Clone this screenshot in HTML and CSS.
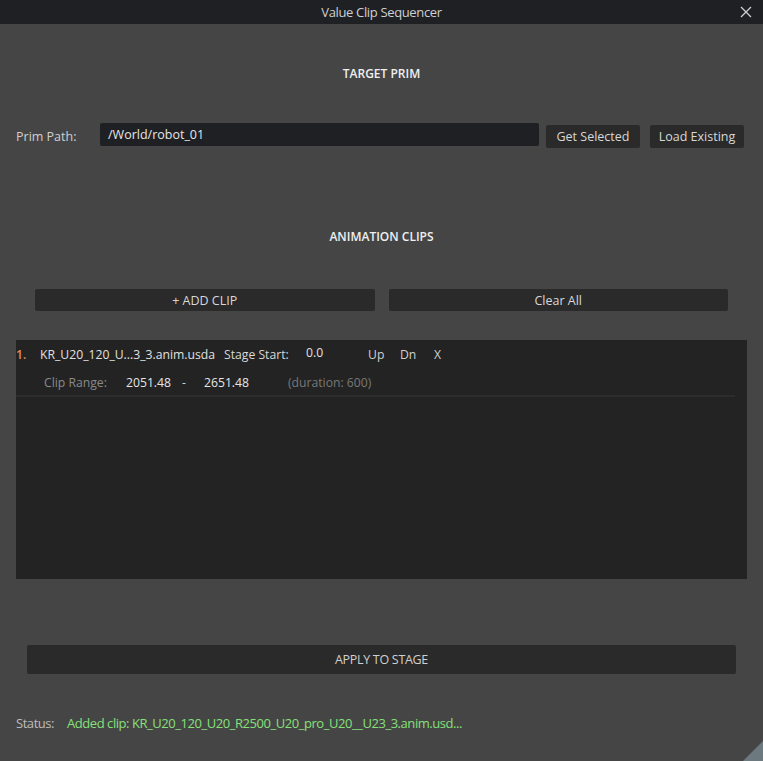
FILE: index.html
```html
<!DOCTYPE html>
<html lang="en">
<head>
    <meta charset="UTF-8">
    <title>Value Clip Sequencer</title>
    <link rel="stylesheet" href="styles.css">
</head>
<body>
    <div class="window">
        <div class="titlebar">
            <span class="title">Value Clip Sequencer</span>
            <svg class="close" width="12" height="12" viewBox="0 0 12 12">
                <path d="M1 1 L11 11 M11 1 L1 11" stroke="#d0d0d0" stroke-width="1.3" fill="none"/>
            </svg>
        </div>

        <div class="section-title first">TARGET PRIM</div>
        <div class="prim-row">
            <label class="label">Prim Path:</label>
            <div class="field">/World/robot_01</div>
            <button class="btn small">Get Selected</button>
            <button class="btn small">Load Existing</button>
        </div>

        <div class="section-title second">ANIMATION CLIPS</div>
        <div class="clip-actions">
            <button class="btn wide">+ ADD CLIP</button>
            <button class="btn wide">Clear All</button>
        </div>

        <div class="clip-list">
            <div class="clip">
                <div class="clip-head">
                    <span class="idx">1.</span>
                    <span class="name">KR_U20_120_U...3_3.anim.usda</span>
                    <span class="stage-label">Stage Start:</span>
                    <span class="stage-val">0.0</span>
                    <span class="act up">Up</span>
                    <span class="act dn">Dn</span>
                    <span class="act x">X</span>
                </div>
                <div class="clip-range">
                    <span class="range-label">Clip Range:</span>
                    <span class="num">2051.48</span>
                    <span class="dash">-</span>
                    <span class="num">2651.48</span>
                    <span class="duration">(duration: 600)</span>
                </div>
            </div>
        </div>

        <div class="apply-row">
            <button class="btn apply">APPLY TO STAGE</button>
        </div>

        <div class="status">
            <span class="status-label">Status:</span>
            <span class="status-text">Added clip: KR_U20_120_U20_R2500_U20_pro_U20__U23_3.anim.usd...</span>
        </div>

        <div class="grip"></div>
    </div>
</body>
</html>
```

FILE: styles.css
```css
body {
    margin: 0;
    background-color: #454545;
    font-family: "Open Sans", "DejaVu Sans", sans-serif;
    font-size: 12.5px;
    color: #d4d4d4;
}
.window {
    position: relative;
    width: 763px;
    height: 761px;
    background-color: #454545;
    overflow: hidden;
}
.titlebar {
    position: relative;
    height: 24px;
    background-color: #1f2024;
    display: flex;
    align-items: center;
    justify-content: center;
}
.title {
    color: #cfcfcf;
    font-size: 13px;
    letter-spacing: -0.35px;
}
.close {
    position: absolute;
    right: 11px;
    top: 6px;
}
.section-title {
    text-align: center;
    color: #f0f0f0;
    font-size: 12px;
    font-weight: 600;
    line-height: 16px;
}
.section-title.first {
    margin-top: 42px;
}
.section-title.second {
    margin-top: 81px;
}
.prim-row {
    display: flex;
    align-items: center;
    margin-top: 41px;
    padding-left: 16px;
    height: 25px;
}
.label {
    width: 84px;
    color: #cfcfcf;
    padding-top: 2px;
}
.field {
    width: 431px;
    height: 23px;
    line-height: 23px;
    padding-left: 8px;
    margin-top: -2px;
    background-color: #1f2023;
    border-radius: 2px;
    color: #e6e6e6;
}
.btn {
    background-color: #2a2a2a;
    color: #d8d8d8;
    border: none;
    border-radius: 2px;
    font-family: "Open Sans", "DejaVu Sans", sans-serif;
    font-size: 12.5px;
    padding: 0;
}
.btn.small {
    width: 94px;
    height: 23px;
    margin-top: 2px;
}
.btn.small:first-of-type {
    margin-left: 7px;
}
.btn.small + .btn.small {
    margin-left: 10px;
}
.clip-actions {
    display: flex;
    gap: 14px;
    padding: 0 35px;
    margin-top: 44px;
}
.btn.wide {
    width: 340px;
    height: 22px;
}
.clip-list {
    margin: 29px 16px 0 16px;
    height: 239px;
    background-color: #232323;
    font-size: 12.2px;
}
.clip {
    margin-right: 12px;
    border-bottom: 2px solid #2c2c2c;
    height: 55px;
}
.clip-head {
    position: relative;
    height: 29px;
}
.clip-head span {
    position: absolute;
    top: 6px;
}
.idx {
    left: 0;
    color: #e08a5a;
    font-weight: 600;
}
.name { left: 24px; color: #e0e0e0; }
.stage-label { left: 208px; color: #d8d8d8; }
.stage-val { left: 290px; top: 4px !important; color: #e0e0e0; }
.up { left: 352px; }
.dn { left: 384px; }
.x { left: 418px; }
.act { color: #d0d0d0; }
.clip-range {
    position: relative;
    height: 26px;
}
.clip-range span {
    position: absolute;
    top: 5px;
}
.range-label { left: 28px; color: #8a8a8a; }
.clip-range .num { color: #e6e6e6; }
.clip-range .num:nth-of-type(2) { left: 110px; }
.clip-range .num:nth-of-type(4) { left: 188px; }
.dash { left: 166px; color: #cfcfcf; }
.duration { left: 272px; color: #787878; }
.apply-row {
    padding: 0 27px;
    margin-top: 66px;
}
.btn.apply {
    width: 709px;
    height: 29px;
    font-size: 12.5px;
    color: #d0d0d0;
    letter-spacing: -0.3px;
}
.status {
    display: flex;
    gap: 13px;
    padding-left: 16px;
    margin-top: 40px;
    font-size: 13px;
    letter-spacing: -0.45px;
}
.status-label { color: #bdbdbd; }
.status-text { color: #86e07a; }
.grip {
    position: absolute;
    right: 0;
    bottom: 0;
    width: 0;
    height: 0;
    border-left: 20px solid transparent;
    border-bottom: 20px solid #6c7a80;
}
```
